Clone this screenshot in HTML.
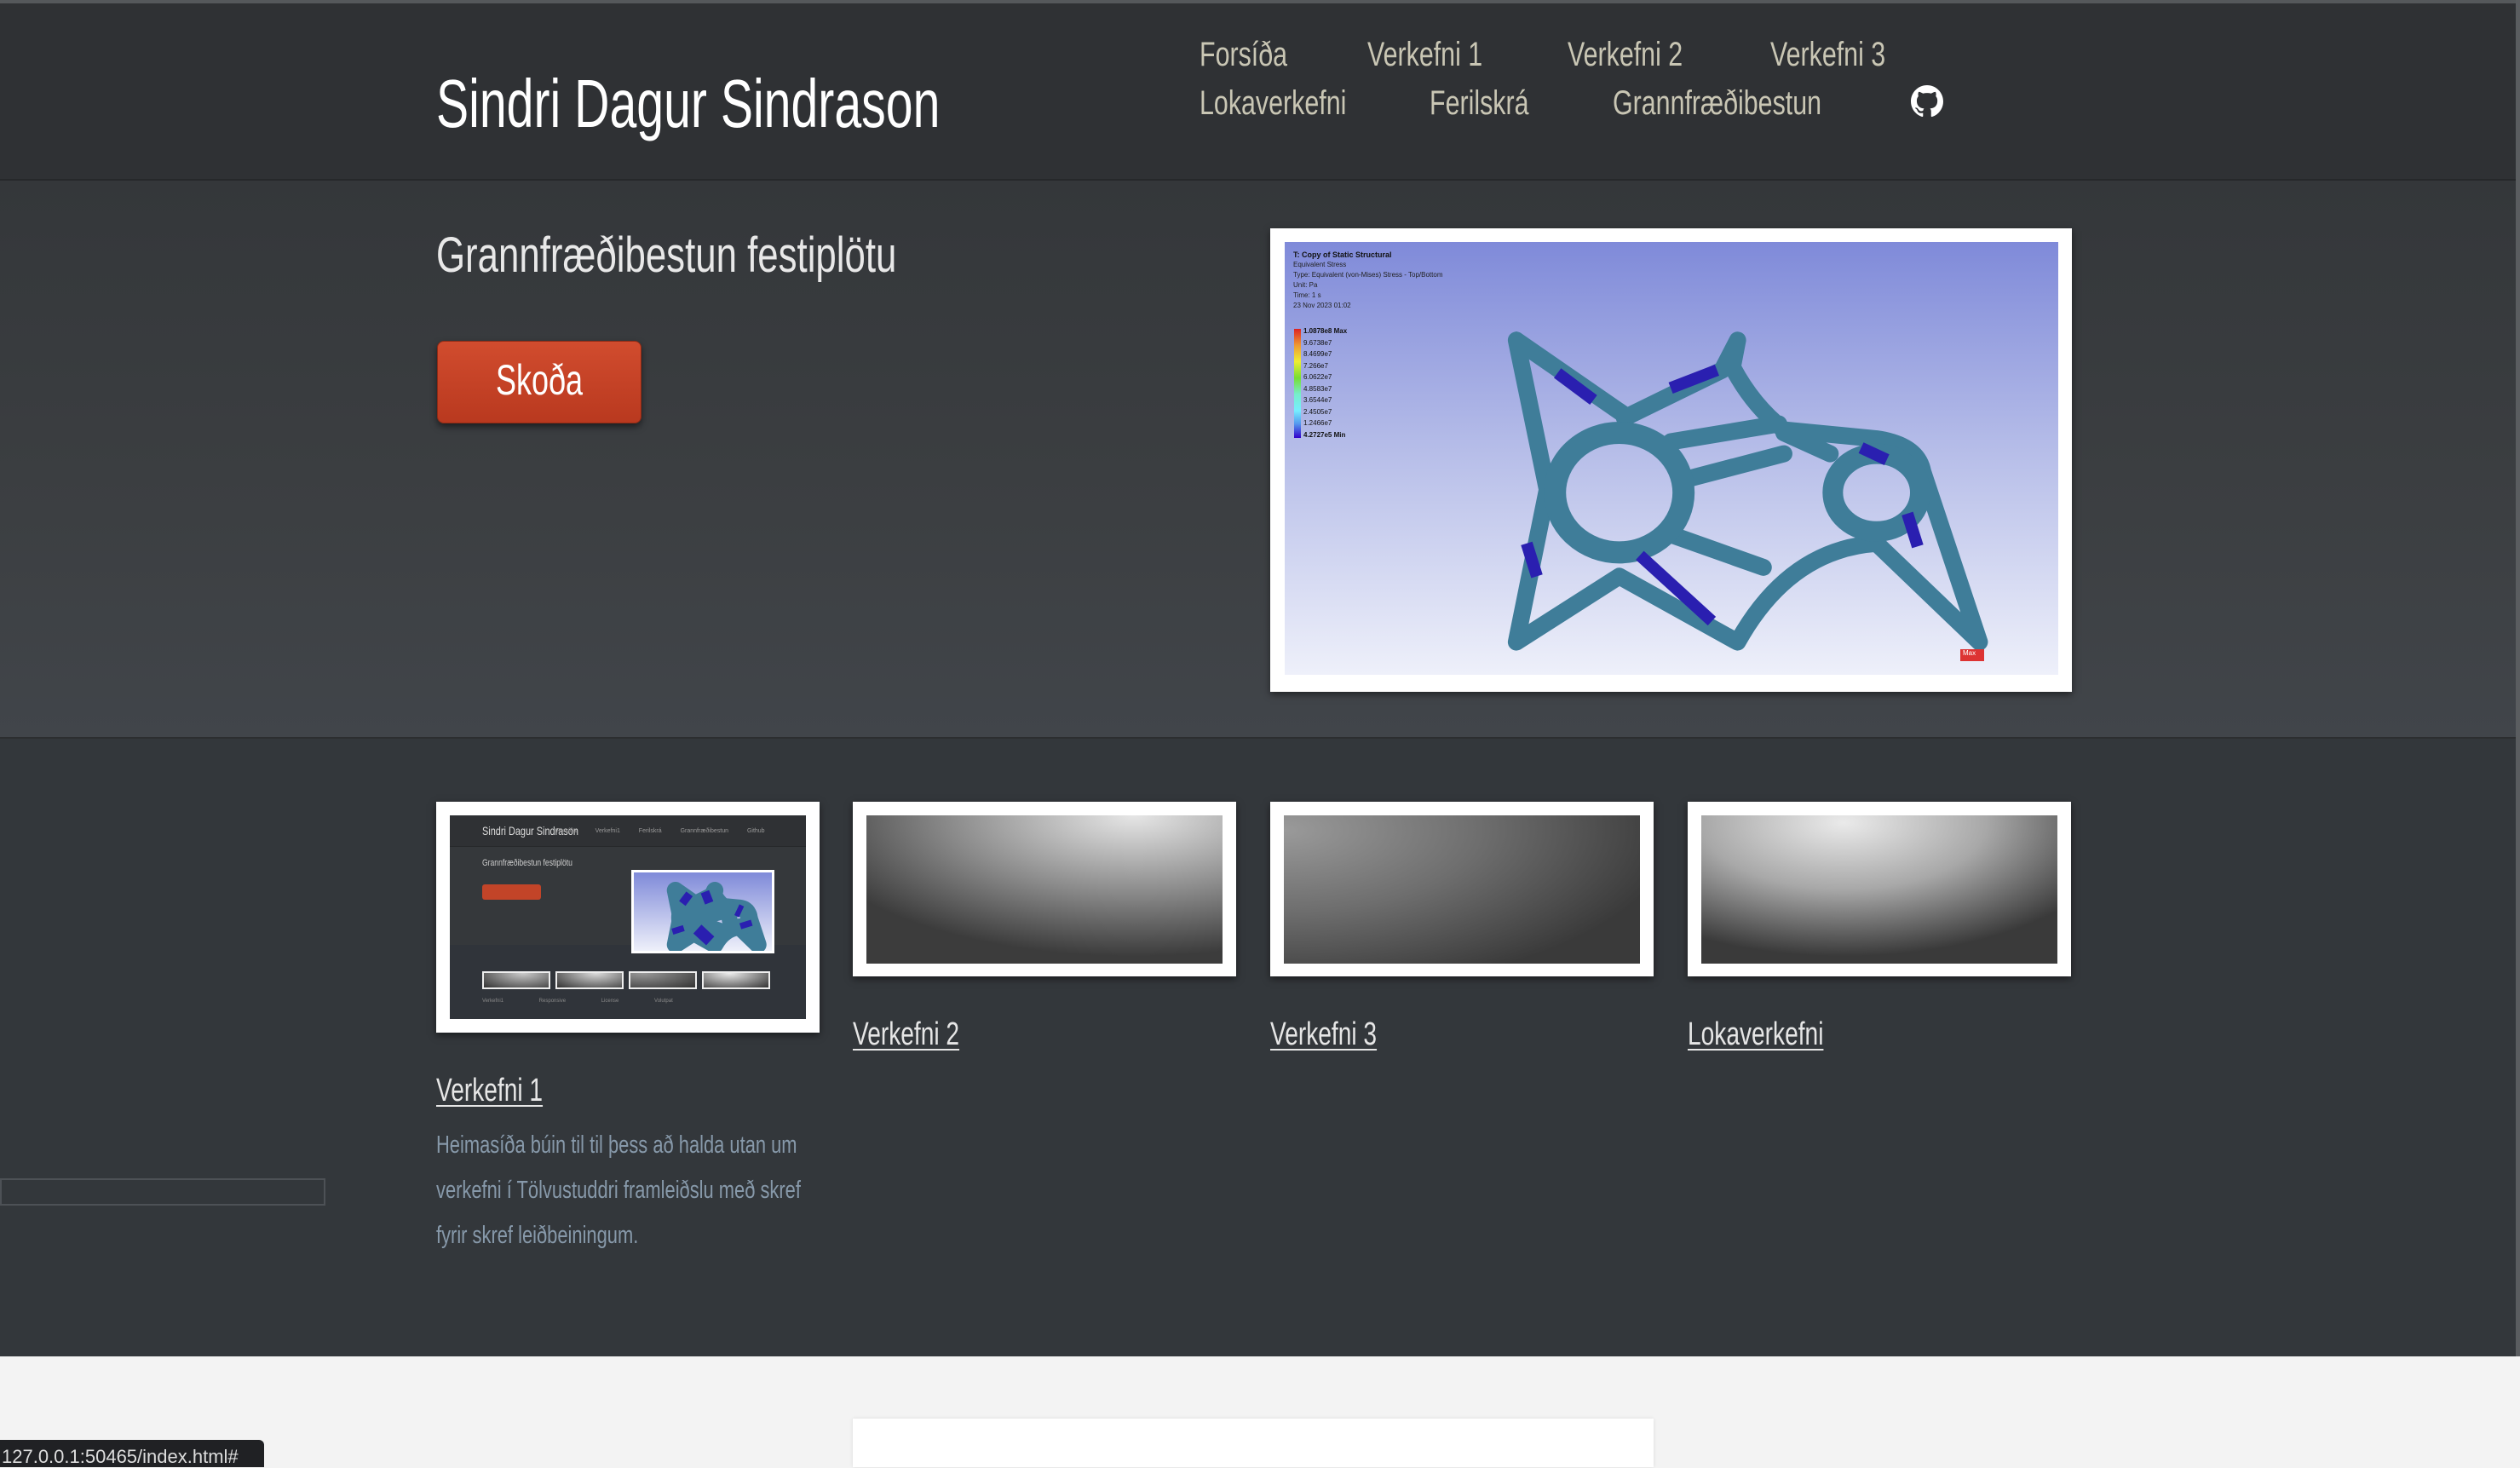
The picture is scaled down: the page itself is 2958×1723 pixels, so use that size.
<!DOCTYPE html>
<html><head><meta charset="utf-8"><style>
*{margin:0;padding:0;box-sizing:border-box}
body{width:2958px;height:1722px;overflow:hidden;background:#f3f3f3;font-family:"Liberation Sans Narrow","Liberation Sans",sans-serif;position:relative}
.a{position:absolute;white-space:nowrap}
.c{transform:scaleX(.78);transform-origin:left top;display:inline-block}
#hdr{position:absolute;left:0;top:0;width:2958px;height:212px;background:#2f3134;border-top:4px solid #55585b;border-bottom:2px solid #26282a}
#hero{position:absolute;left:0;top:212px;width:2958px;height:655px;background:linear-gradient(#34373a,#3c3f42 60%,#41454a);border-bottom:2px solid #2c2e30}
#low{position:absolute;left:0;top:867px;width:2958px;height:725px;background:#33373b}
.nav{font-size:40px;color:#c9c6b4}
.box{position:absolute;background:#fff;box-shadow:0 3px 8px rgba(0,0,0,.5)}
.lk{font-size:38px;color:#e6e6e6}
.lk span{text-decoration:underline;text-underline-offset:5px;text-decoration-thickness:2px}
.p{font-size:29px;color:#8799aa;line-height:53px}
</style></head><body>
<div id="hdr"></div>
<div id="hero"></div>
<div id="low"></div>
<div style="position:absolute;right:0;top:0;width:5px;height:1592px;background:#5a5d60"></div>

<div class="a" style="left:512px;top:76px;font-size:80px;color:#fff"><span class="c" style="transform:scaleX(.715)">Sindri Dagur Sindrason</span></div>
<div class="a nav" style="left:1408px;top:42px"><span class="c" style="transform:scaleX(.76)">Forsíða</span></div>
<div class="a nav" style="left:1605px;top:42px"><span class="c" style="transform:scaleX(.76)">Verkefni 1</span></div>
<div class="a nav" style="left:1840px;top:42px"><span class="c" style="transform:scaleX(.76)">Verkefni 2</span></div>
<div class="a nav" style="left:2078px;top:42px"><span class="c" style="transform:scaleX(.76)">Verkefni 3</span></div>
<div class="a nav" style="left:1408px;top:99px"><span class="c" style="transform:scaleX(.76)">Lokaverkefni</span></div>
<div class="a nav" style="left:1678px;top:99px"><span class="c" style="transform:scaleX(.76)">Ferilskrá</span></div>
<div class="a nav" style="left:1893px;top:99px"><span class="c" style="transform:scaleX(.76)">Grannfræðibestun</span></div>
<svg class="a" style="left:2243px;top:100px" width="38" height="38" viewBox="0 0 16 16"><path fill="#fff" d="M8 0C3.580 0 0 3.58 0 8c0 3.54 2.29 6.53 5.47 7.59.4.07.55-.17.55-.38 0-.19-.01-.82-.01-1.49-2.01.37-2.530-.49-2.69-.94-.09-.23-.48-.94-.82-1.13-.28-.15-.68-.52-.01-.53.63-.01 1.08.58 1.23.82.72 1.21 1.87.87 2.33.66.07-.52.28-.87.51-1.07-1.78-.2-3.64-.89-3.64-3.95 0-.87.31-1.59.82-2.15-.08-.2-.36-1.02.08-2.12 0 0 .67-.21 2.2.82.64-.18 1.32-.27 2-.27.68 0 1.36.09 2 .27 1.53-1.04 2.2-.82 2.2-.82.44 1.1.16 1.92.08 2.12.51.56.82 1.27.82 2.15 0 3.07-1.87 3.75-3.65 3.950.29.25.54.73.54 1.48 0 1.07-.01 1.93-.01 2.2 0 .21.15.46.55.38A8.013 8.013 0 0016 8c0-4.42-3.58-8-8-8z"/></svg>

<div class="a" style="left:512px;top:266px;font-size:58px;color:#e8e8e8"><span class="c" style="transform:scaleX(.755)">Grannfræðibestun festiplötu</span></div>
<div class="a" style="left:513px;top:400px;width:240px;height:97px;background:linear-gradient(#d14c2e,#b9391f);border-radius:8px;box-shadow:0 4px 8px rgba(0,0,0,.5);border:1px solid #8f2a15"></div>
<div class="a" style="left:582px;top:417px;font-size:50px;color:#fff"><span class="c" style="transform:scaleX(.72)">Skoða</span></div>

<svg width="0" height="0" style="position:absolute"><defs>
<symbol id="part" viewBox="0 0 1568 1568" preserveAspectRatio="none">
<g fill="none" stroke="#3f7d99" stroke-linecap="round" stroke-linejoin="round">
<path vector-effect="non-scaling-stroke" stroke-width="20" d="M480 380 L690 630 M480 380 L540 880 L480 1390 L680 1170 L910 1390 M690 640 L880 480 L910 380 L900 470 Q940 600 1000 680 L1180 710 Q1260 730 1270 820 L1380 1390 L1180 1060 Q1010 1080 910 1390 M780 720 L990 660 M800 850 L1000 760 M780 1030 L960 1140 M1000 690 L1090 760"/>
<ellipse vector-effect="non-scaling-stroke" stroke-width="26" cx="680" cy="890" rx="125" ry="200"/>
<ellipse vector-effect="non-scaling-stroke" stroke-width="24" cx="1180" cy="890" rx="85" ry="130"/>
</g>
<g fill="none" stroke="#2a1fb0" stroke-width="14">
<path vector-effect="non-scaling-stroke" d="M560 490 L630 580 M780 540 L870 480 M720 1100 L860 1320 M500 1060 L520 1170 M1150 740 L1200 780 M1240 960 L1260 1070"/>
</g>
</symbol></defs></svg>

<div class="box" style="left:1491px;top:268px;width:941px;height:544px"></div>
<div class="a" style="left:1508px;top:284px;width:908px;height:508px;background:linear-gradient(#7f8ad9,#b8bfe9 50%,#eef0fa)">
<svg width="908" height="508" style="position:absolute;left:0;top:0"><use href="#part" x="-18" y="-18" width="947" height="550"/></svg>
<div style="position:absolute;left:10px;top:10px;font:bold 9px 'Liberation Sans',sans-serif;color:#111">T: Copy of Static Structural</div>
<div style="position:absolute;left:10px;top:21px;font:8px/12px 'Liberation Sans',sans-serif;color:#222">Equivalent Stress<br>Type: Equivalent (von-Mises) Stress - Top/Bottom<br>Unit: Pa<br>Time: 1 s<br>23 Nov 2023 01:02</div>
<div style="position:absolute;left:11px;top:102px;width:8px;height:128px;background:linear-gradient(#d22,#e93 15%,#ee3 30%,#7d3 45%,#7ec 60%,#7ef 75%,#59e 87%,#30c)"></div>
<div style="position:absolute;left:22px;top:98px;font:8px/13.5px 'Liberation Sans',sans-serif;color:#111"><b>1.0878e8 Max</b><br>9.6738e7<br>8.4699e7<br>7.266e7<br>6.0622e7<br>4.8583e7<br>3.6544e7<br>2.4505e7<br>1.2466e7<br><b>4.2727e5 Min</b></div>
<div style="position:absolute;left:793px;top:478px;width:28px;height:14px;background:#d33;font:8px 'Liberation Sans';color:#fff;padding-left:3px">Max</div>
</div>

<!-- thumbnails -->
<div class="box" style="left:512px;top:941px;width:450px;height:271px"></div>
<div class="a" style="left:528px;top:957px;width:418px;height:239px;background:#35383b;overflow:hidden">
<div style="position:absolute;left:0;top:0;width:418px;height:37px;background:#2f3134;border-bottom:1px solid #26282a"></div>
<div style="position:absolute;left:38px;top:10px;font-size:14px;color:#ddd"><span class="c">Sindri Dagur Sindrason</span></div>
<div style="position:absolute;left:125px;top:15px;font-size:7px;color:#999;word-spacing:20px">Forsíða Verkefni1 Ferilskrá Grannfræðibestun Github</div>
<div style="position:absolute;left:38px;top:50px;font-size:11px;color:#ccc"><span class="c">Grannfræðibestun festiplötu</span></div>
<div style="position:absolute;left:38px;top:81px;width:69px;height:18px;background:#c24428;border-radius:3px"></div>
<div style="position:absolute;left:0;top:152px;width:418px;height:87px;background:#30343a"></div>
<div style="position:absolute;left:213px;top:64px;width:168px;height:98px;background:#fff"></div>
<div style="position:absolute;left:216px;top:67px;width:162px;height:92px;background:linear-gradient(#7f8ad9,#eef0fa)">
<svg width="162" height="92" style="position:absolute"><use href="#part" x="-3" y="-3" width="169" height="99"/></svg></div>
<div style="position:absolute;left:38px;top:183px;width:80px;height:21px;border:2px solid #eee;background:radial-gradient(at 60% 0,#ccc,#333)"></div>
<div style="position:absolute;left:124px;top:183px;width:80px;height:21px;border:2px solid #eee;background:radial-gradient(at 60% 0,#ddd,#333)"></div>
<div style="position:absolute;left:210px;top:183px;width:80px;height:21px;border:2px solid #eee;background:radial-gradient(at 20% 0,#999,#333)"></div>
<div style="position:absolute;left:296px;top:183px;width:80px;height:21px;border:2px solid #eee;background:radial-gradient(at 40% 0,#eee,#333)"></div>
<div style="position:absolute;left:38px;top:215px;font-size:6px;color:#888;word-spacing:40px">Verkefni1 Responsive License Volutpat</div>
</div>

<div class="box" style="left:1001px;top:941px;width:450px;height:205px"></div>
<div class="a" style="left:1017px;top:957px;width:418px;height:174px;background:radial-gradient(ellipse 95% 95% at 75% 0%,#e6e6e6,#8a8a8a 55%,#3c3c3c)"></div>
<div class="box" style="left:1491px;top:941px;width:450px;height:205px"></div>
<div class="a" style="left:1507px;top:957px;width:418px;height:174px;background:radial-gradient(ellipse 110% 110% at 0% 10%,#9a9a9a,#6e6e6e 50%,#3a3a3a)"></div>
<div class="box" style="left:1981px;top:941px;width:450px;height:205px"></div>
<div class="a" style="left:1997px;top:957px;width:418px;height:174px;background:radial-gradient(ellipse 80% 90% at 40% 5%,#eaeaea,#a8a8a8 50%,#3a3a3a)"></div>

<div class="a lk" style="left:1001px;top:1193px"><span class="c" style="transform:scaleX(.74)">Verkefni 2</span></div>
<div class="a lk" style="left:1491px;top:1193px"><span class="c" style="transform:scaleX(.74)">Verkefni 3</span></div>
<div class="a lk" style="left:1981px;top:1193px"><span class="c" style="transform:scaleX(.74)">Lokaverkefni</span></div>
<div class="a lk" style="left:512px;top:1259px"><span class="c" style="transform:scaleX(.74)">Verkefni 1</span></div>
<div class="a p" style="left:512px;top:1318px"><span class="c" style="transform:scaleX(.755)">Heimasíða búin til til þess að halda utan um<br>verkefni í Tölvustuddri framleiðslu með skref<br>fyrir skref leiðbeiningum.</span></div>

<div class="a" style="left:0;top:1383px;width:382px;height:32px;border:2px solid #4d5156"></div>

<div class="a" style="left:1001px;top:1665px;width:940px;height:57px;background:#fff;box-shadow:0 0 4px rgba(0,0,0,.1)"></div>
<div class="a" style="left:0;top:1690px;width:310px;height:32px;background:#202124;border-radius:0 6px 0 0;font:22px 'Liberation Sans',sans-serif;color:#ddd;padding:7px 0 0 2px">127.0.0.1:50465/index.html#</div>
</body></html>
